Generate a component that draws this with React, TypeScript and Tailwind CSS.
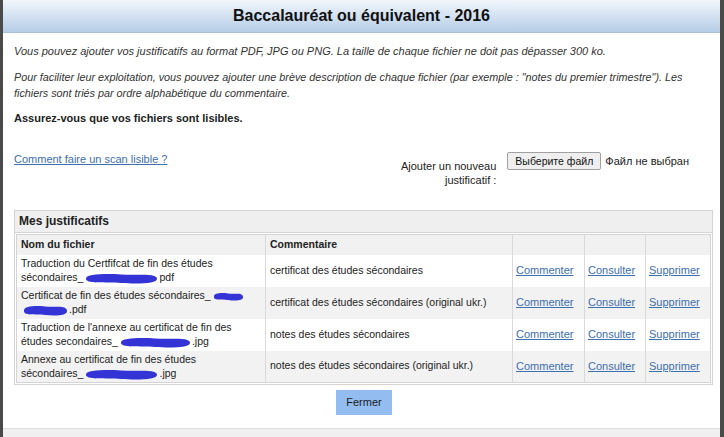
const font = { fontFamily: '"Liberation Sans", Arial, sans-serif' };

function Scribble({ w, h = 13 }: { w: number; h?: number }) {
  // hand-drawn redaction blob
  return (
    <svg
      width={w}
      height={h}
      viewBox={`0 0 ${w} ${h}`}
      className="inline-block align-middle"
      aria-hidden
    >
      <path
        d={`M3 ${h / 2} C 3 2, ${w * 0.3} 1.5, ${w * 0.5} 2.5 S ${w - 3} 1, ${w - 2} ${h / 2} S ${w * 0.7} ${h - 1}, ${w * 0.5} ${h - 2} S 2 ${h - 1}, 3 ${h / 2} Z`}
        fill="#3434d6"
      />
    </svg>
  );
}

type Row = { name: React.ReactNode; comment: string };

const rows: Row[] = [
  {
    name: (
      <>
        Traduction du Certfifcat de fin des études
        <br />
        sécondaires_
        <Scribble w={76} />
        pdf
      </>
    ),
    comment: "certificat des études sécondaires",
  },
  {
    name: (
      <>
        Certificat de fin des études sécondaires_
        <Scribble w={34} h={11} />
        <br />
        <Scribble w={48} />
        .pdf
      </>
    ),
    comment: "certificat des études sécondaires (original ukr.)",
  },
  {
    name: (
      <>
        Traduction de l'annexe au certificat de fin des
        <br />
        études secondaires_
        <Scribble w={74} />
        .jpg
      </>
    ),
    comment: "notes des études sécondaires",
  },
  {
    name: (
      <>
        Annexe au certificat de fin des études
        <br />
        sécondaires_
        <Scribble w={76} />
        .jpg
      </>
    ),
    comment: "notes des études sécondaires (original ukr.)",
  },
];

export default function App() {
  return (
    <div
      style={font}
      className="flex h-[437px] w-[724px] flex-col overflow-hidden border-l-[3px] border-r-[4px] border-[#4a4a4a] bg-white text-[11px] text-[#222]"
    >
      <div className="flex h-[33px] shrink-0 items-center justify-center border-b border-[#a9c0da] bg-gradient-to-b from-[#f1f6fc] to-[#b6cde6]">
        <h1 className="text-[16px] font-bold text-[#111]">
          Baccalauréat ou équivalent - 2016
        </h1>
      </div>

      <div className="flex-1 pl-[11px] pr-[6px] pt-[10px]">
        <p className="whitespace-nowrap italic leading-4 text-[#333]">
          Vous pouvez ajouter vos justificatifs au format PDF, JPG ou PNG. La
          taille de chaque fichier ne doit pas dépasser 300 ko.
        </p>
        <p className="mt-[10px] whitespace-nowrap text-[10.8px] italic leading-4 text-[#333]">
          Pour faciliter leur exploitation, vous pouvez ajouter une brève
          description de chaque fichier (par exemple : "notes du premier
          trimestre"). Les
          <br />
          fichiers sont triés par ordre alphabétique du commentaire.
        </p>
        <p className="mt-[9px] font-bold leading-4">
          Assurez-vous que vos fichiers sont lisibles.
        </p>

        <div className="mt-[25px] flex items-start">
          <a href="#" className="flex-1 leading-4 text-[#3d6eae] underline">
            Comment faire un scan lisible ?
          </a>
          <div className="mr-[25px] flex items-start">
            <span className="mt-[8px] whitespace-nowrap text-right leading-[14px]">
              Ajouter un nouveau
              <br />
              justificatif :
            </span>
            <button className="ml-[11px] mt-[1px] h-[18px] rounded-[2px] border border-[#a0a0a0] bg-[#efefef] px-[7px] text-[10.5px] leading-none text-[#111]">
              Выберите файл
            </button>
            <span className="ml-[4px] mt-[2px] leading-4">Файл не выбран</span>
          </div>
        </div>

        <div className="mr-[1px] mt-[23px] border border-[#d4d4d4] bg-white">
          <div className="border-b border-[#d4d4d4] bg-[#efefef] px-[4px] py-[3px] text-[12px] font-bold leading-[15px]">
            Mes justificatifs
          </div>
          <div className="p-[1px]">
            <table className="w-full border-collapse border border-[#d4d4d4] text-left text-[10.5px]">
              <thead>
                <tr className="h-[20px] bg-[#f1f1f1]">
                  <th className="w-[249px] border-r border-[#d9d9d9] px-[4px] font-bold">
                    Nom du fichier
                  </th>
                  <th className="w-[247px] border-r border-[#d9d9d9] px-[4px] font-bold">
                    Commentaire
                  </th>
                  <th className="w-[72px] border-r border-[#d9d9d9]" />
                  <th className="w-[61px] border-r border-[#d9d9d9]" />
                  <th />
                </tr>
              </thead>
              <tbody>
                {rows.map((row, i) => (
                  <tr
                    key={i}
                    className={`h-[32px] ${i % 2 === 1 ? "bg-[#f2f2f2]" : "bg-white"}`}
                  >
                    <td className="whitespace-nowrap border-r border-[#d9d9d9] px-[4px] leading-[14px]">
                      {row.name}
                    </td>
                    <td className="whitespace-nowrap border-r border-[#d9d9d9] px-[4px]">
                      {row.comment}
                    </td>
                    <td className="border-r border-[#d9d9d9] px-[3px] text-[11px]">
                      <a href="#" className="text-[#3d6eae] underline">
                        Commenter
                      </a>
                    </td>
                    <td className="border-r border-[#d9d9d9] px-[3px] text-[11px]">
                      <a href="#" className="text-[#3d6eae] underline">
                        Consulter
                      </a>
                    </td>
                    <td className="px-[3px] text-[11px]">
                      <a href="#" className="text-[#3d6eae] underline">
                        Supprimer
                      </a>
                    </td>
                  </tr>
                ))}
              </tbody>
            </table>
          </div>
        </div>

        <div className="mt-[5px] flex justify-center">
          <button className="h-[25px] w-[56px] bg-[#93bdf0] text-[11px] text-[#1a1a1a]">
            Fermer
          </button>
        </div>
      </div>

      <div className="h-[9px] shrink-0 border-t border-[#dcdcdc] bg-[#f0f0f0]" />
    </div>
  );
}
